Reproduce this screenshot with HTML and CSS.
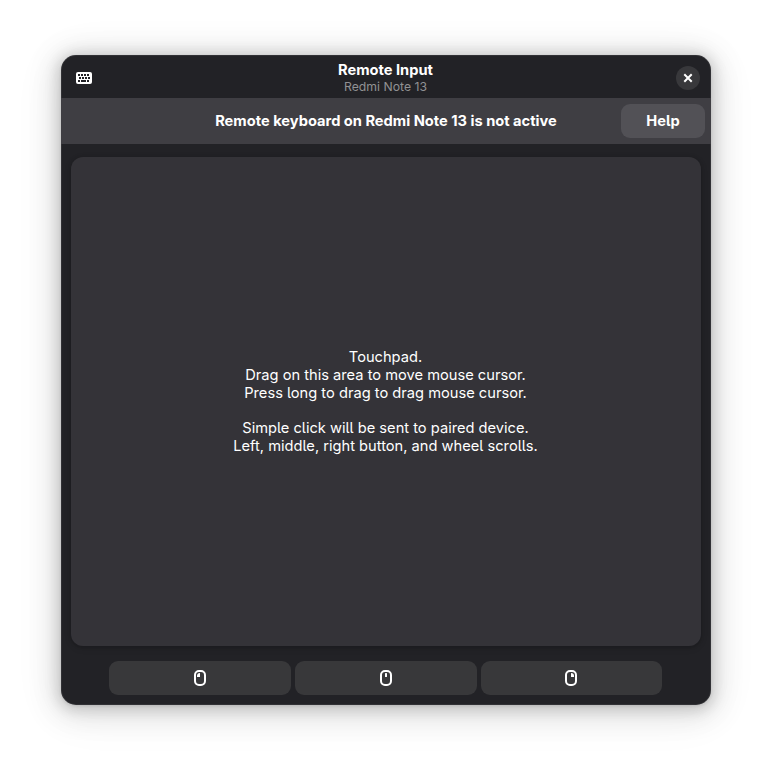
FILE: index.html
```html
<!DOCTYPE html>
<html lang="en">
<head>
<meta charset="utf-8">
<title>Remote Input</title>
<link rel="stylesheet" href="styles.css">
</head>
<body>
<main class="window">
  <header class="headerbar">
    <svg class="keyboard" width="16" height="16" viewBox="0 0 16 16" shape-rendering="crispEdges"><rect y="2" width="16" height="12" rx="2" fill="#fff" shape-rendering="auto"/><path fill="#222226" d="M2 4h2v2H2zM5 4h2v2H5zM8 4h2v2H8zM11 4h2v2h-2zM3 7h2v2H3zM6 7h2v2H6zM9 7h2v2H9zM12 7h2v2h-2zM2 10h2v2H2zM5 10h5v2H5zM11 10h2v2h-2z"/></svg>
    <div class="titles">
      <h1 class="title">Remote Input</h1>
      <p class="subtitle">Redmi Note 13</p>
    </div>
    <button class="close" aria-label="Close"><svg width="16" height="16" viewBox="0 0 16 16"><path d="M5 5l6 6M11 5l-6 6" stroke="#fff" stroke-width="2" stroke-linecap="square"/></svg></button>
  </header>
  <section class="banner">
    <p class="banner-text">Remote keyboard on Redmi Note 13 is not active</p>
    <button class="help">Help</button>
  </section>
  <section class="touchpad">
    <p class="hint">Touchpad.<br>Drag on this area to move mouse cursor.<br>Press long to drag to drag mouse cursor.</p>
    <p class="hint">Simple click will be sent to paired device.<br>Left, middle, right button, and wheel scrolls.</p>
  </section>
  <footer class="buttons">
    <button class="mouse" aria-label="Left"><svg width="16" height="16" viewBox="0 0 16 16"><rect x="3" y="1" width="10" height="14" rx="4" fill="none" stroke="#fff" stroke-width="2"/><path d="M8 3v4H5V6a3 3 0 0 1 3-3z" fill="#fff"/></svg></button>
    <button class="mouse" aria-label="Middle"><svg width="16" height="16" viewBox="0 0 16 16"><rect x="3" y="1" width="10" height="14" rx="4" fill="none" stroke="#fff" stroke-width="2"/><rect x="7" y="3" width="2" height="4" rx=".5" fill="#fff"/></svg></button>
    <button class="mouse mouse-right" aria-label="Right"><svg width="16" height="16" viewBox="0 0 16 16"><rect x="3" y="1" width="10" height="14" rx="4" fill="none" stroke="#fff" stroke-width="2"/><path d="M8 3v4h3V6a3 3 0 0 0-3-3z" fill="#fff"/></svg></button>
  </footer>
</main>
</body>
</html>
```
FILE: styles.css
```css
* { box-sizing: border-box; }
body {
  margin: 0;
  height: 772px;
  padding: 55px 61px 0;
  overflow: hidden;
  background: #fff;
  color: #fff;
  font-family: Inter, "Noto Sans", sans-serif;
  font-size: 14.667px;
  font-feature-settings: "cv05" 1;
}
h1, p { margin: 0; }
button {
  border: 0;
  padding: 0;
  color: inherit;
  font: inherit;
  font-feature-settings: inherit;
  display: flex;
  align-items: center;
  justify-content: center;
}
svg { display: block; }
.window {
  width: 650px;
  height: 650px;
  display: flex;
  flex-direction: column;
  overflow: hidden;
  border-radius: 15px;
  background: #222226;
  box-shadow: inset 0 0 0 1px rgba(255,255,255,.07), 0 1px 3px rgba(0,0,0,.09), 0 2px 14px 3px rgba(0,0,0,.15), 0 4px 28px 9px rgba(0,0,0,.09), 0 6px 50px 4px rgba(0,0,0,.06);
}
.headerbar {
  height: 43px;
  flex: none;
  display: grid;
  grid-template-columns: 24px 1fr 24px;
  align-items: center;
  padding: 2px 11px 0;
}
.keyboard { margin-left: 4px; }
.titles { text-align: center; padding-right: 1px; }
.title { font-size: 14.667px; line-height: 18px; font-weight: 700; }
.subtitle { font-size: 12.25px; line-height: 15px; color: #919193; }
.close { width: 24px; height: 24px; border-radius: 50%; background: #38383b; }
.banner {
  height: 46px;
  flex: none;
  display: grid;
  grid-template-columns: 84px 1fr 84px;
  align-items: center;
  padding: 0 6px;
  background: #3f3e43;
}
.banner-text { grid-column: 2; text-align: center; font-weight: 700; white-space: nowrap; }
.help { height: 34px; border-radius: 9px; background: #525156; font-weight: 700; }
.touchpad {
  flex: none;
  height: 489px;
  margin: 13px 10px 0;
  padding-right: 1px;
  display: flex;
  flex-direction: column;
  justify-content: center;
  gap: 17px;
  border-radius: 12px;
  background: #343338;
  box-shadow: 0 1px 3px 1px rgba(0,0,6,.12), 0 2px 6px 2px rgba(0,0,6,.05);
}
.hint { text-align: center; line-height: 18px; }
.buttons {
  margin: 15px 49px 0 48px;
  display: grid;
  grid-template-columns: 182px 182px 181px;
  gap: 4px;
}
.mouse { height: 34px; border-radius: 9px; background: #38383a; }
.mouse-right { padding-right: 1px; }
```
